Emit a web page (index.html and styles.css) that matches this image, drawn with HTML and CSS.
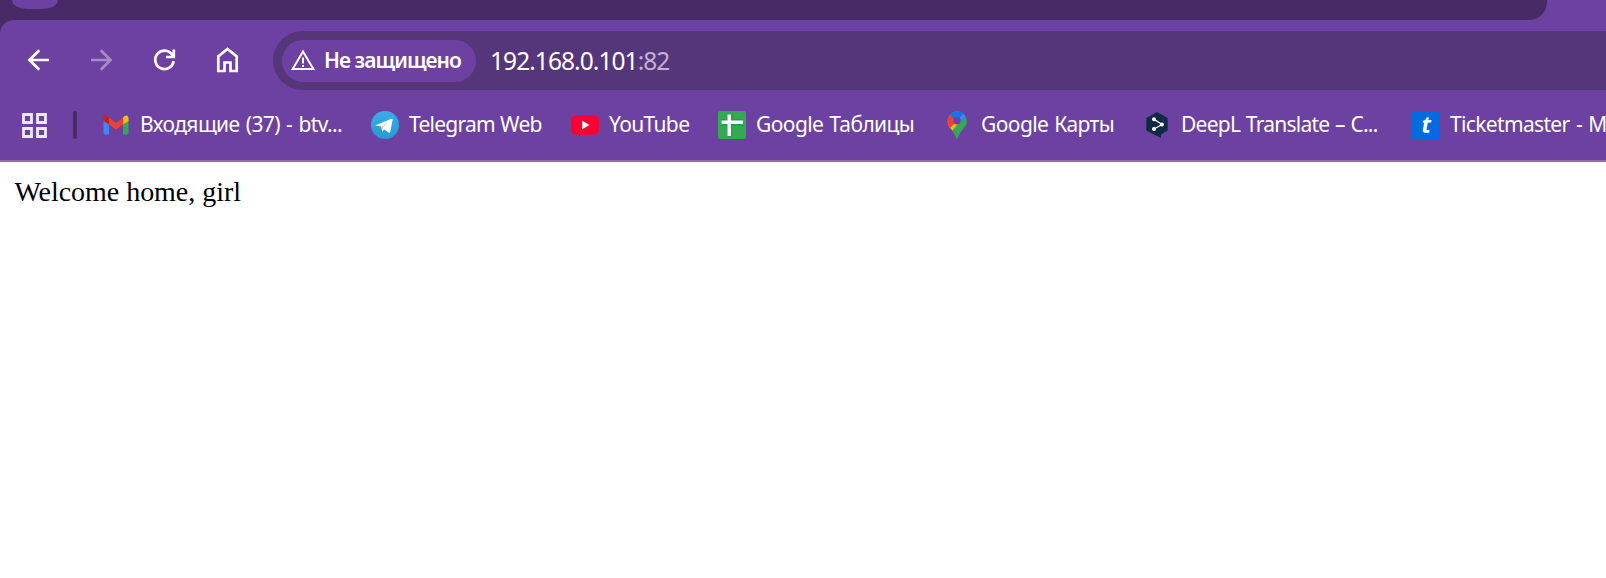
FILE: index.html
```html
<!DOCTYPE html>
<html lang="ru">
<head>
<meta charset="utf-8">
<title>192.168.0.101:82</title>
<link rel="stylesheet" href="styles.css">
</head>
<body>
<header class="browser">
  <div class="tabstrip"><div class="tabs"><div class="tab"></div></div></div>
  <div class="chrome">
    <div class="toolbar">
      <nav class="nav">
        <svg class="nav-icon" viewBox="0 0 28 28"><path d="M25 14H5.500M15.300 4.300L5.500 14l9.800 9.700"/></svg>
        <svg class="nav-icon disabled" viewBox="0 0 28 28"><path d="M4 14H23.500M13.700 4.300L23.500 14l-9.800 9.700"/></svg>
        <svg class="nav-icon" viewBox="0 0 28 28"><path d="M23.600 15A9.200 9.200 0 1 1 22.100 8.700L23.500 10.500M23.800 3.500V11H16"/></svg>
        <svg class="nav-icon" viewBox="0 0 28 28"><path d="M5.300 25V10.500L14.500 3l9.200 7.500V25H17.500v-8.500h-6V25z"/></svg>
      </nav>
      <div class="omnibox">
        <div class="chip">
          <svg class="warn" viewBox="0 0 26 24"><path class="outline" d="M13 3.500L23.300 21H2.700z"/><path class="mark" d="M13 9.500v6M13 17v2"/></svg>
          <span class="chip-text">Не защищено</span>
        </div>
        <div class="url"><span class="host">192.168.0.101</span><span class="port">:82</span></div>
      </div>
    </div>
    <div class="bookmarks">
      <svg class="apps" viewBox="0 0 25 25"><path d="M1.500 1.500h8v8h-8zM15.500 1.500h8v8h-8zM1.500 15.500h8v8h-8zM15.500 15.500h8v8h-8z"/></svg>
      <div class="divider"></div>
      <div class="bookmark b-mail">
        <svg class="favicon" viewBox="0 0 28 28"><path fill="#4285f4" d="M1.500 9l5.500 4v10.500H3.200a1.700 1.700 0 0 1-1.700-1.700z"/><path fill="#34a853" d="M21 13l5.500-4v12.800a1.700 1.700 0 0 1-1.700 1.700H21z"/><path fill="#ea4335" d="M6.500 6.300l7.500 5.700 7.500-5.700V13L14 18.800 6.500 13z"/><path fill="#c5221f" d="M1.500 10V7.500C1.500 4 4.500 3.500 7 6.700V13.500z"/><path fill="#fbbc04" d="M26.500 10V7.500c0-3.500-3-4-5.500-.8v6.800z"/></svg>
        <span class="label">Входящие (37) - btv...</span>
      </div>
      <div class="bookmark b-telegram">
        <svg class="favicon" viewBox="0 0 28 28"><defs><linearGradient id="sky" x2="0" y2="1"><stop stop-color="#38aee8"/><stop offset="1" stop-color="#2699d1"/></linearGradient></defs><circle cx="14" cy="14" r="14" fill="url(#sky)"/><path fill="#fff" d="M4.500 14.200L20.300 7.800c1-.4 1.500.1 1.300 1.100l-2.400 12c-.2 1-.9 1.200-1.700.7l-4.200-3-2 2.200-1-5.200-5.600-1.200c-.7-.2-.7-.1-.2-.2z"/><path fill="#c9dff0" d="M10.300 15.600l7-4.700-5.500 5.900-.5 4z"/></svg>
        <span class="label">Telegram Web</span>
      </div>
      <div class="bookmark b-youtube">
        <svg class="favicon" viewBox="0 0 28 28"><path fill="#ff0033" d="M4 4.500Q14 3.700 24 4.500q3.300.3 3.700 3.200.6 6.300 0 12.600-.4 2.900-3.700 3.200-10 .8-20 0Q.7 23.200.3 20.300q-.6-6.300 0-12.600Q.7 4.800 4 4.500z"/><path fill="#fff" d="M11.200 9.800v8.400l7.300-4.200z"/></svg>
        <span class="label">YouTube</span>
      </div>
      <div class="bookmark b-sheets">
        <svg class="favicon" viewBox="0 0 28 28"><rect width="28" height="28" rx="2.500" fill="#34a853"/><path fill="#2b8c45" d="M9 2.500h5.500V8H25v7H14.500v10.500H9V15H3V8h6z" opacity=".5"/><path fill="#fff" d="M9.500 3.500h3.500V9.500H25v3.500H13v12H9.500V13H3.500V9.500h6z"/></svg>
        <span class="label">Google Таблицы</span>
      </div>
      <div class="bookmark b-maps">
        <svg class="favicon" viewBox="0 0 28 28"><defs><clipPath id="pin"><path d="M14 .3A9.700 9.700 0 0 1 23.700 10C23.700 17 16 19.500 14.800 27q-.8 1.500-1.600 0C12 19.500 4.300 17 4.300 10A9.700 9.700 0 0 1 14 .3z"/></clipPath></defs><g clip-path="url(#pin)"><path fill="#34a853" d="M0 0h28v28H0z"/><path fill="#fbbc04" d="M0 17L14 5l3 8.500L7.500 22z"/><path fill="#ea4335" d="M0 0l6.500 3.700L14 10l-7.500 7.500L0 14z"/><path fill="#1a73e8" d="M6.500 3.700L12 9l5 2 4-9L12-2z"/><path fill="#4285f4" d="M14 10l7-8 5 2-10 11z"/><path fill="#34a853" d="M14 14L25 4v24H8V21z"/></g><circle cx="14" cy="9.700" r="3.700" fill="#6d41a1"/></svg>
        <span class="label">Google Карты</span>
      </div>
      <div class="bookmark b-deepl">
        <svg class="favicon" viewBox="0 0 28 28"><path fill="#0f2b46" d="M14 1l10.700 6v12.500L18 23.500V27l-4.500-2.300L3.300 19.500V7z"/><path fill="none" stroke="#fff" stroke-width="1.300" d="M11 8.300L19 13.500 11 18"/><g fill="#fff"><circle cx="11" cy="8.300" r="2"/><circle cx="19" cy="13.500" r="2"/><circle cx="11" cy="18" r="2"/></g></svg>
        <span class="label">DeepL Translate – C...</span>
      </div>
      <div class="bookmark b-ticket">
        <span class="favicon t-icon">t</span>
        <span class="label">Ticketmaster - M</span>
      </div>
    </div>
  </div>
</header>
<main class="page">Welcome home, girl</main>
</body>
</html>
```
FILE: styles.css
```css
* { box-sizing: border-box; }
html, body { height: 100%; }
body { margin: 0; overflow: hidden; background: #fff; }
.browser {
  height: 162px;
  overflow: hidden;
  background: #472a66;
  font-family: "Noto Sans", "Open Sans", sans-serif;
  color: #fff;
}
.tabstrip { height: 20px; background: #6d41a1; }
.tabs { width: 1547px; height: 20px; background: #472a66; border-bottom-right-radius: 18px; }
.tab { width: 46px; height: 9px; margin-left: 12px; background: #6d41a1; border-radius: 0 0 15px 15px / 0 0 9px 9px; }
.chrome {
  height: 142px;
  background: #6d41a1;
  border-top-left-radius: 14px;
}
.chrome::after { content: ""; display: block; height: 2px; margin-top: 11px; background: #9068b4; }
.toolbar { display: flex; height: 81px; padding-top: 11px; }
.nav { display: flex; align-items: center; gap: 35px; width: 273px; height: 58px; padding-left: 24px; }
.nav-icon { width: 28px; height: 28px; fill: none; stroke: #fff; stroke-width: 2.7; }
.disabled { opacity: .4; }
.omnibox {
  display: flex;
  align-items: center;
  flex: 1;
  height: 59px;
  padding-left: 9px;
  background: #56367a;
  border-radius: 30px 0 0 30px;
}
.chip { display: flex; align-items: center; width: 194px; height: 42px; padding-left: 8px; background: #6d41a1; border-radius: 21px; }
.warn { flex: none; width: 26px; height: 24px; fill: none; stroke: #fff; margin-top: -2px; }
.outline { stroke-width: 2; }
.mark { stroke-width: 2; }
.chip-text { margin: -1px 0 0 8px; font-size: 21px; font-weight: 600; line-height: 42px; letter-spacing: -.95px; white-space: nowrap; }
.url { display: flex; margin-left: 14px; font-size: 24.5px; line-height: 42px; letter-spacing: -.94px; white-space: nowrap; }
.port { color: #c3b0d6; }
.bookmarks { display: flex; align-items: center; height: 48px; padding-left: 22px; }
.apps { flex: none; width: 25px; height: 25px; fill: none; stroke: #eee8f5; stroke-width: 2.8; }
.divider { flex: none; width: 4px; height: 28px; margin-left: 26px; background: #472a66; border-radius: 2px; }
.bookmark { display: flex; flex: none; align-items: center; gap: 10px; white-space: nowrap; font-size: 21px; line-height: 28px; }
.label { margin-top: -2px; }
.favicon { flex: none; width: 28px; height: 28px; }
.b-mail { width: 269px; margin-left: 25px; letter-spacing: -.6px; word-spacing: 1.3px; }
.b-telegram { width: 200px; letter-spacing: -.75px; word-spacing: .5px; }
.b-youtube { width: 147px; letter-spacing: -.65px; }
.b-sheets { width: 225px; letter-spacing: -.6px; word-spacing: 1px; }
.b-maps { width: 200px; letter-spacing: -.6px; word-spacing: 1px; }
.b-deepl { width: 269px; letter-spacing: -.76px; word-spacing: 1px; }
.b-ticket { letter-spacing: -.65px; word-spacing: 1.5px; }
.t-icon { background: #026cdf; color: #fff; text-align: center; font: italic 700 23px/26px "Open Sans", sans-serif; }
.page { padding: 14px 14px 14px 14.4px; font: 28px/32px "Liberation Serif", serif; letter-spacing: -.03px; color: #000; }
```
